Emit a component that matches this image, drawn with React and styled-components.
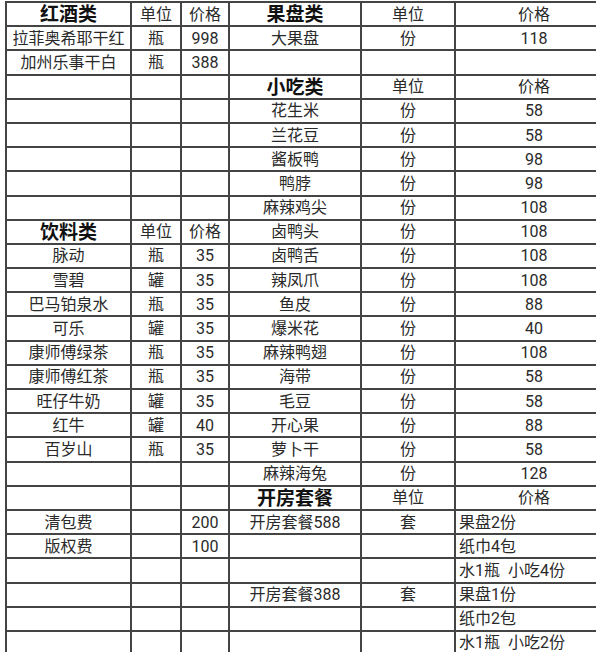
import React from 'react'
import styled, { createGlobalStyle } from 'styled-components'

const Global = createGlobalStyle`
    body{
        margin: 0;
        background: #fff;
        font-family: "Roboto", "Noto Sans CJK SC", "Noto Sans", sans-serif;
    }
`

const Frame = styled.div`
    width: 591px;
    height: 651px;
    margin: 1px 0 0 5px;
    overflow: hidden;
`

const Sheet = styled.div`
    display: grid;
    grid-template-columns: 125px 50px 48px 132px 94px 156px;
    grid-auto-rows: 24.2px;
    width: 607px;
    border-top: 2px solid #444;
    border-left: 2px solid #444;
`

const Cell = styled.div`
    box-sizing: border-box;
    display: flex;
    align-items: center;
    justify-content: ${p => p.$left ? 'flex-start' : 'center'};
    padding-left: ${p => p.$left ? '3px' : '0'};
    padding-top: 1px;
    border-bottom: 2px solid #444;
    border-right: ${p => p.$last ? 'none' : '2px solid #444'};
    font-size: ${p => p.$head ? '19px' : '16px'};
    font-weight: ${p => p.$head ? 700 : 400};
    color: ${p => p.$head ? '#111' : '#2a2a2a'};
    white-space: pre;
    line-height: 1;
`

const H = t => ({ t, head: true })
const L = t => ({ t, left: true })

const rows = [
    [H('红酒类'), '单位', '价格', H('果盘类'), '单位', '价格'],
    ['拉菲奥希耶干红', '瓶', '998', '大果盘', '份', '118'],
    ['加州乐事干白', '瓶', '388', '', '', ''],
    ['', '', '', H('小吃类'), '单位', '价格'],
    ['', '', '', '花生米', '份', '58'],
    ['', '', '', '兰花豆', '份', '58'],
    ['', '', '', '酱板鸭', '份', '98'],
    ['', '', '', '鸭脖', '份', '98'],
    ['', '', '', '麻辣鸡尖', '份', '108'],
    [H('饮料类'), '单位', '价格', '卤鸭头', '份', '108'],
    ['脉动', '瓶', '35', '卤鸭舌', '份', '108'],
    ['雪碧', '罐', '35', '辣凤爪', '份', '108'],
    ['巴马铂泉水', '瓶', '35', '鱼皮', '份', '88'],
    ['可乐', '罐', '35', '爆米花', '份', '40'],
    ['康师傅绿茶', '瓶', '35', '麻辣鸭翅', '份', '108'],
    ['康师傅红茶', '瓶', '35', '海带', '份', '58'],
    ['旺仔牛奶', '罐', '35', '毛豆', '份', '58'],
    ['红牛', '罐', '40', '开心果', '份', '88'],
    ['百岁山', '瓶', '35', '萝卜干', '份', '58'],
    ['', '', '', '麻辣海兔', '份', '128'],
    ['', '', '', H('开房套餐'), '单位', '价格'],
    ['清包费', '', '200', '开房套餐588', '套', L('果盘2份')],
    ['版权费', '', '100', '', '', L('纸巾4包')],
    ['', '', '', '', '', L('水1瓶  小吃4份')],
    ['', '', '', '开房套餐388', '套', L('果盘1份')],
    ['', '', '', '', '', L('纸巾2包')],
    ['', '', '', '', '', L('水1瓶  小吃2份')],
]

export default function App() {
    return (
        <>
            <Global />
            <Frame>
                <Sheet>
                    {rows.map((row, r) => row.map((c, i) => {
                        const cell = typeof c === 'string' ? { t: c } : c
                        return (
                            <Cell key={r + '-' + i} $head={cell.head} $left={cell.left} $last={i === 5}>
                                {cell.t}
                            </Cell>
                        )
                    }))}
                </Sheet>
            </Frame>
        </>
    )
}
